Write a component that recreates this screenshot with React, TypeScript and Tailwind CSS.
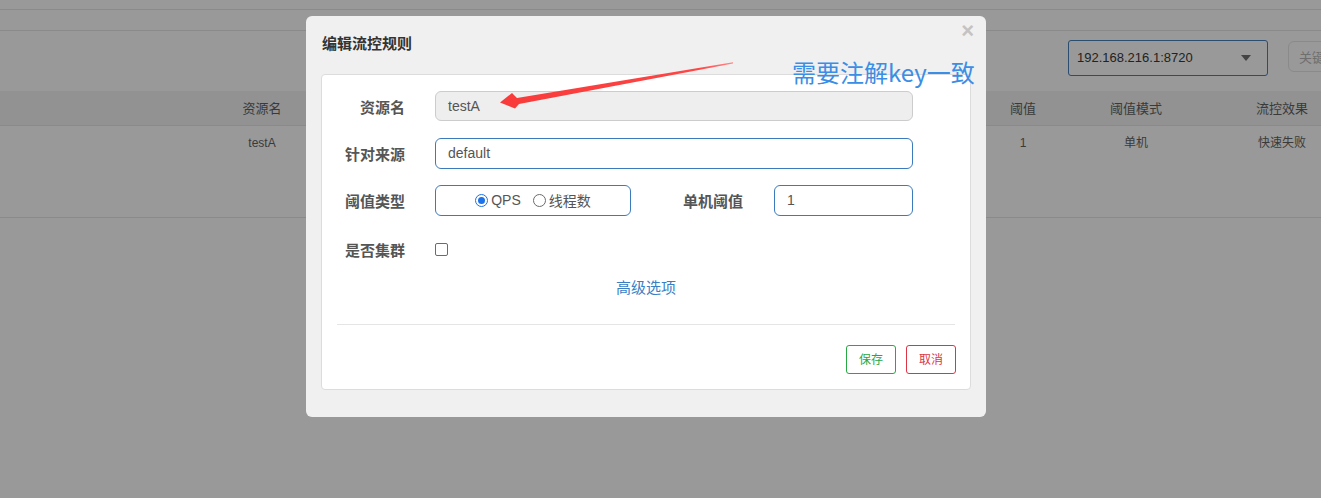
import React from "react";

const cjk = '"Noto Sans CJK SC", "Noto Sans", sans-serif';
const latin = '"Liberation Sans", Arial, "Noto Sans CJK SC", sans-serif';

function Cols({ a, b, c, d, cls }: { a: string; b: string; c: string; d: string; cls: string }) {
  return (
    <div className={`flex h-full w-[1355px] items-center ${cls}`}>
      <div className="w-[524px] shrink-0 text-center">{a}</div>
      <div className="w-[459px] shrink-0" />
      <div className="w-[80px] shrink-0 text-center">{b}</div>
      <div className="w-[146px] shrink-0 text-center">{c}</div>
      <div className="w-[146px] shrink-0 text-center">{d}</div>
    </div>
  );
}

export default function App() {
  return (
    <div
      className="relative w-[1321px] h-[498px] overflow-hidden bg-[#999999]"
      style={{ fontFamily: latin }}
    >
      {/* background page */}
      <div className="h-[10px] border-b border-[#8a8a8a]" />
      <div className="h-[21px] border-b border-[#8a8a8a]" />
      <div className="flex h-[60px] items-start pl-[1068px] pt-[9px] gap-[20px]">
        <div className="flex h-[36px] w-[200px] shrink-0 items-center justify-between rounded-[3px] border border-[#2c4c70] pl-[8px] pr-[16px] text-[13px] text-[#222]">
          <span>192.168.216.1:8720</span>
          <svg width="10" height="6" viewBox="0 0 10 6">
            <path d="M0 0 L10 0 L5 6 Z" fill="#444" />
          </svg>
        </div>
        <div
          className="mt-[1px] flex h-[31px] w-[80px] shrink-0 items-center overflow-hidden rounded-[6px] border border-[#8a8a8a] pl-[10px] text-[13px] text-[#6f6f6f]"
          style={{ fontFamily: cjk }}
        >
          关键
        </div>
      </div>
      <div className="h-[35px] overflow-hidden border-b border-[#8a8a8a] bg-[#929292]">
        <Cols a="资源名" b="阈值" c="阈值模式" d="流控效果" cls="text-[13px] text-[#3a3a3a] pt-[1px]" />
      </div>
      <div className="h-[92px] overflow-hidden border-b border-[#8a8a8a]">
        <div className="h-[33px]">
          <Cols a="testA" b="1" c="单机" d="快速失败" cls="text-[12px] text-[#3a3a3a]" />
        </div>
      </div>

      {/* modal */}
      <div className="absolute left-[306px] top-[16px] flex h-[401px] w-[680px] flex-col rounded-[6px] bg-[#f0f0f0]">
        <div className="relative h-[58px] shrink-0 px-[16px] pt-[17px]">
          <div className="text-[15px] font-bold leading-[20px] text-[#333]" style={{ fontFamily: cjk }}>
            编辑流控规则
          </div>
          <div className="absolute right-[12px] top-[4px] text-[22px] font-bold leading-[22px] text-[#c3c3c3]" style={{ fontFamily: latin }}>
            ×
          </div>
        </div>
        <div className="mx-[15px] flex h-[316px] flex-col rounded-[4px] border border-[#dcdcdc] bg-white">
          <div className="flex flex-col gap-[17px] pt-[16px]">
            {/* row 1 */}
            <div className="flex h-[30px] items-center">
              <div className="w-[83px] pt-[2px] text-right text-[15px] font-bold text-[#555]" style={{ fontFamily: cjk }}>
                资源名
              </div>
              <div className="ml-[30px] flex h-[30px] w-[478px] items-center rounded-[6px] border border-[#cccccc] bg-[#eeeeee] pl-[12px] text-[14px] text-[#555]">
                testA
              </div>
            </div>
            {/* row 2 */}
            <div className="flex h-[30px] items-center">
              <div className="w-[83px] pt-[2px] text-right text-[15px] font-bold text-[#555]" style={{ fontFamily: cjk }}>
                针对来源
              </div>
              <div className="ml-[30px] flex h-[31px] w-[478px] items-center rounded-[6px] border border-[#3b7bbd] bg-white pl-[12px] text-[14px] text-[#555]">
                default
              </div>
            </div>
            {/* row 3 */}
            <div className="flex h-[30px] items-center">
              <div className="w-[83px] pt-[2px] text-right text-[15px] font-bold text-[#555]" style={{ fontFamily: cjk }}>
                阈值类型
              </div>
              <div className="ml-[30px] flex h-[31px] w-[196px] items-center justify-center gap-[4px] rounded-[6px] border border-[#3b7bbd] bg-white text-[14px] text-[#555]">
                <span className="flex items-center gap-[3px]">
                  <span className="flex h-[13px] w-[13px] items-center justify-center rounded-full border border-[#1a73e8] bg-white">
                    <span className="h-[7px] w-[7px] rounded-full bg-[#1a73e8]" />
                  </span>
                  <span>QPS</span>
                </span>
                <span className="ml-[8px] flex items-center gap-[3px]">
                  <span className="h-[13px] w-[13px] rounded-full border border-[#6b6b6b] bg-white" />
                  <span style={{ fontFamily: cjk }}>线程数</span>
                </span>
              </div>
              <div className="ml-[52px] w-[60px] pt-[2px] text-[15px] font-bold text-[#555]" style={{ fontFamily: cjk }}>
                单机阈值
              </div>
              <div className="ml-[31px] flex h-[31px] w-[139px] items-center rounded-[6px] border border-[#3b7bbd] bg-white pl-[12px] text-[14px] text-[#555]">
                1
              </div>
            </div>
            {/* row 4 */}
            <div className="mt-[2px] flex h-[30px] items-center">
              <div className="w-[83px] pt-[2px] text-right text-[15px] font-bold text-[#555]" style={{ fontFamily: cjk }}>
                是否集群
              </div>
              <div className="ml-[30px] h-[13px] w-[13px] rounded-[2px] border border-[#6b6b6b] bg-white" />
            </div>
          </div>
          <div className="mt-[12px] text-center text-[15px] text-[#3a7fc4]" style={{ fontFamily: cjk }}>
            高级选项
          </div>
          <div className="mx-[15px] mt-[25px] border-t border-[#e5e5e5]" />
          <div className="mr-[14px] mt-[20px] flex justify-end gap-[10px]">
            <div className="flex h-[29px] w-[50px] items-center justify-center rounded-[3px] border border-[#28a745] text-[12px] text-[#28a745]" style={{ fontFamily: cjk }}>
              保存
            </div>
            <div className="flex h-[29px] w-[50px] items-center justify-center rounded-[3px] border border-[#dc3545] text-[12px] text-[#dc3545]" style={{ fontFamily: cjk }}>
              取消
            </div>
          </div>
        </div>
      </div>

      {/* annotation */}
      <div
        className="absolute left-[792px] top-[55px] text-[24px] leading-[34px] text-[#3a8ee6]"
        style={{ fontFamily: cjk }}
      >
        需要注解key一致
      </div>
      <svg className="absolute left-0 top-0" width="1321" height="498" style={{ pointerEvents: "none" }}>
        <defs>
          <linearGradient id="ag" x1="733" y1="62" x2="500" y2="102" gradientUnits="userSpaceOnUse">
            <stop offset="0" stopColor="#ff8a8a" />
            <stop offset="0.15" stopColor="#ff4545" />
            <stop offset="1" stopColor="#f83a3a" />
          </linearGradient>
        </defs>
        <polygon
          points="733,62.2 733,63.4 519,104 515,108.5 500,102.5 512,93 517,98"
          fill="url(#ag)"
        />
      </svg>
    </div>
  );
}
